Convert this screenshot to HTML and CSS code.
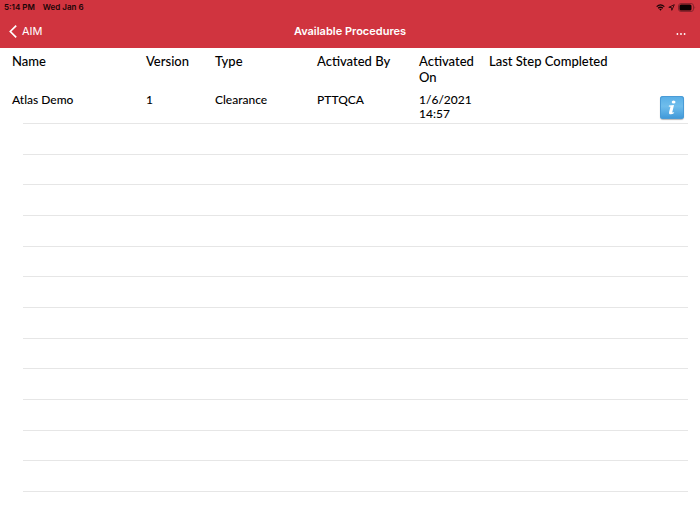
FILE: index.html
```html
<!DOCTYPE html>
<html lang="en">
<head>
  <meta charset="UTF-8">
  <title>Available Procedures</title>
  <meta name="viewport" content="width=device-width, initial-scale=1.0">
  <link rel="stylesheet" href="styles.css">
</head>
<body>

<header class="header">
  <div class="status-bar">
    <span>5:14 PM</span>
    <span>Wed Jan 6</span>
    <div class="status-icons">
      <svg width="9" height="7" viewBox="0 0 10 8" fill="none" stroke="#180506" stroke-width="1.5">
        <path d="M0.6 3 Q5 -1 9.4 3"/>
        <path d="M2.3 4.9 Q5 2.6 7.7 4.9"/>
        <path d="M3.6 6 Q5 4.9 6.4 6 L5 7.6 Z" fill="#180506" stroke="none"/>
      </svg>
      <svg width="7" height="7" viewBox="0 0 7 7" fill="none" stroke="#3a0c10" stroke-width="1">
        <path d="M6.3 0.7 L0.8 3.3 L3.5 3.6 L3.8 6.3 Z"/>
      </svg>
      <svg width="18" height="9" viewBox="0 0 18 9">
        <rect x="0.5" y="0.5" width="15" height="8" rx="2.5" fill="none" stroke="#8a232d"/>
        <rect x="1.5" y="1.5" width="12" height="6" rx="1.5" fill="#0c0203"/>
        <path d="M16.5 3 Q18 4.5 16.5 6 Z" fill="#8a232d"/>
      </svg>
    </div>
  </div>
  <nav class="nav-bar">
    <a href="#" class="back">
      <svg width="8" height="13" viewBox="0 0 8 13" fill="none" stroke="#fff" stroke-width="1.7">
        <path d="M7.2 0.6 L1.3 6.5 L7.2 12.4"/>
      </svg>
      AIM
    </a>
    <h1>Available Procedures</h1>
    <button type="button" class="more" aria-label="More">
      <svg width="10" height="2" viewBox="0 0 10 2" fill="#fff">
        <circle cx="1.4" cy="1" r="0.9"/>
        <circle cx="5" cy="1" r="0.9"/>
        <circle cx="8.6" cy="1" r="0.9"/>
      </svg>
    </button>
  </nav>
</header>

<main class="content">
  <table class="procedures">
    <colgroup>
      <col class="col-name">
      <col class="col-version">
      <col class="col-type">
      <col class="col-by">
      <col class="col-on">
      <col>
      <col class="col-info">
    </colgroup>
    <thead>
      <tr>
        <th>Name</th>
        <th>Version</th>
        <th>Type</th>
        <th>Activated By</th>
        <th>Activated On</th>
        <th>Last Step Completed</th>
        <th></th>
      </tr>
    </thead>
    <tbody>
      <tr>
        <td>Atlas Demo</td>
        <td>1</td>
        <td>Clearance</td>
        <td>PTTQCA</td>
        <td>1/6/2021 14:57</td>
        <td></td>
        <td>
          <button type="button" class="info" aria-label="Procedure info">
            <svg width="24" height="24" viewBox="0 0 24 24" fill="#fff">
              <ellipse cx="13.6" cy="6" rx="1.9" ry="1.6"/>
              <path d="M9 9.5 L14 9 L12.3 16 Q12.1 17 14.2 16 L13.8 17.3 Q11.8 18.8 9.8 18.2 Q8.6 17.7 9.1 16 L10.5 10.7 L8.7 10.6 Z"/>
            </svg>
          </button>
        </td>
      </tr>
    </tbody>
  </table>

  <!-- empty rows -->
  <div class="empty-rows">
    <div></div>
    <div></div>
    <div></div>
    <div></div>
    <div></div>
    <div></div>
    <div></div>
    <div></div>
    <div></div>
    <div></div>
    <div></div>
    <div></div>
  </div>
</main>

</body>
</html>
```
FILE: styles.css
```css
* {
  box-sizing: border-box;
}

body {
  margin: 0;
  min-height: 100vh;
  display: flex;
  flex-direction: column;
  background: #fff;
  color: #000;
  font-family: Lato, "Liberation Sans", sans-serif;
}

button {
  border: none;
  padding: 0;
  background: none;
  cursor: pointer;
}

svg {
  display: block;
}

.header {
  background: #d0343f;
  font-family: Inter, "Liberation Sans", sans-serif;
}

.status-bar {
  display: flex;
  align-items: center;
  gap: 8px;
  height: 14px;
  padding: 0 4px;
  font-size: 8px;
  font-weight: 600;
  color: #180506;
}

.status-icons {
  display: flex;
  align-items: center;
  gap: 3px;
  margin-left: auto;
}

.nav-bar {
  display: grid;
  grid-template-columns: 1fr auto 1fr;
  align-items: center;
  height: 34px;
  padding: 0 9px;
  color: #fff;
}

.back {
  display: flex;
  align-items: center;
  gap: 5px;
  font-size: 11px;
  color: #fff;
  text-decoration: none;
}

.nav-bar h1 {
  margin: 0;
  font-size: 11px;
  font-weight: 600;
}

.more {
  justify-self: end;
  padding: 8px 5px 2px;
}

.content {
  flex: 1;
  display: flex;
  flex-direction: column;
}

.procedures {
  width: 100%;
  table-layout: fixed;
  border-collapse: collapse;
}

.col-name { width: 146px; }
.col-version { width: 69px; }
.col-type { width: 102px; }
.col-by { width: 102px; }
.col-on { width: 70px; }
.col-info { width: 40px; }

.procedures th,
.procedures td {
  padding: 0;
  text-align: left;
  vertical-align: top;
  font-weight: 500;
}

.procedures th {
  height: 45px;
  padding-top: 5px;
  font-size: 13px;
  line-height: 16px;
}

.procedures td {
  height: 30px;
  font-size: 12px;
  line-height: 14px;
}

.procedures th:first-child,
.procedures td:first-child {
  padding-left: 12px;
}

.info {
  display: block;
  width: 24px;
  height: 23px;
  margin-top: 3px;
  border-radius: 3px;
  background: linear-gradient(#58aee6, #6fbdec 45%, #3e97d8);
  box-shadow: inset 0 0 0 1px #4a9bd6, 0 1px 1px #b8b8b8;
}

.empty-rows {
  flex: 1;
  display: flex;
  flex-direction: column;
  margin: 0 12px 33px 23px;
  border-top: 1px solid #e6e6e6;
}

.empty-rows div {
  flex: 1;
  min-height: 24px;
  border-bottom: 1px solid #e6e6e6;
}
```
